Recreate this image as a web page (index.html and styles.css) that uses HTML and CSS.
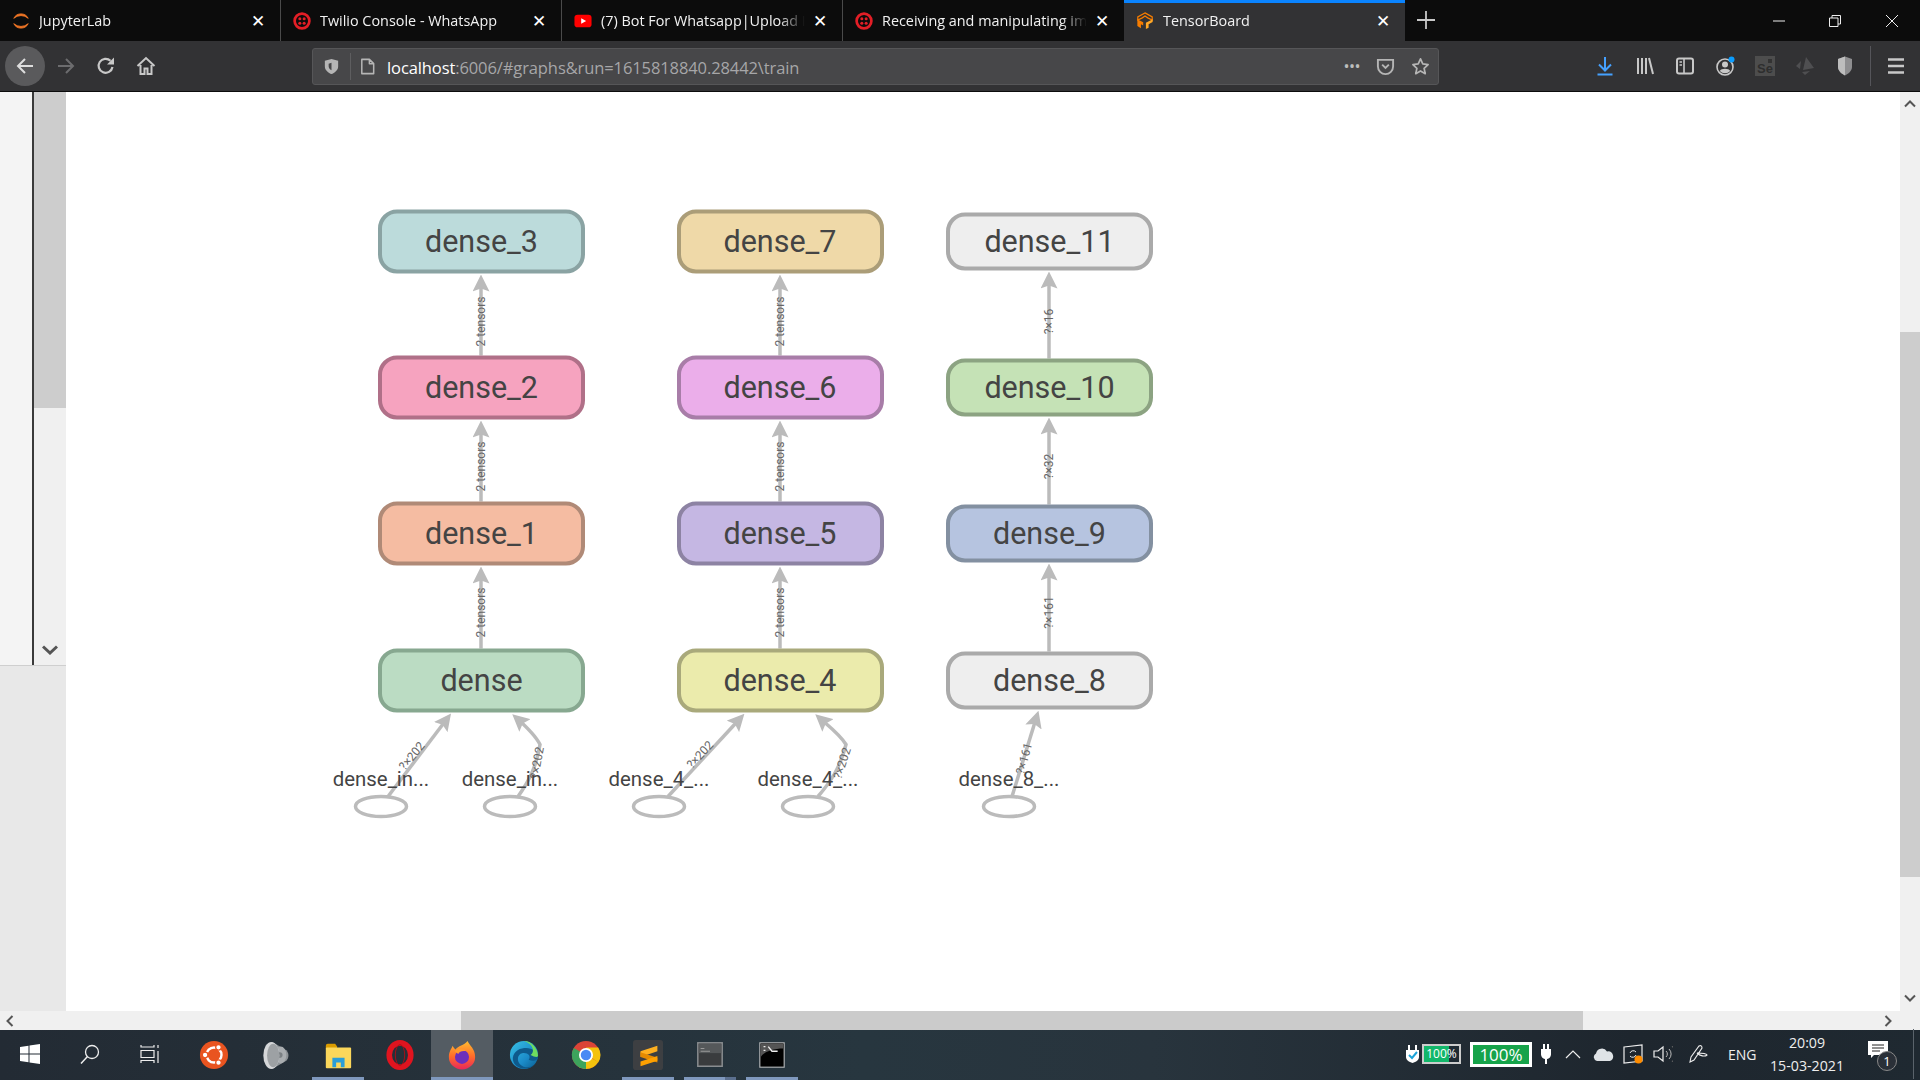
FILE: index.html
```html
<!DOCTYPE html>
<html lang="en">
<head>
    <meta charset="UTF-8">
    <meta name="viewport" content="width=device-width, initial-scale=1.0">
    <title>TensorBoard</title>
    <link rel="stylesheet" href="styles.css">
</head>
<body>
    <!-- browser tabs -->
    <div class="tabbar">
        <div class="tab">
            <svg class="favicon" viewBox="0 0 20 20"><path d="M2 7 A9 9 0 0 1 18 7 A12 12 0 0 0 2 7Z" fill="#f37726" stroke="#f37726"/><path d="M2 13 A9 9 0 0 0 18 13 A12 12 0 0 1 2 13Z" fill="#f37726" stroke="#f37726"/></svg>
            <span class="tab-label">JupyterLab</span>
            <span class="tab-close">✕</span>
        </div>
        <div class="tab">
            <svg class="favicon" viewBox="0 0 20 20"><circle cx="10" cy="10" r="8.2" fill="none" stroke="#e31e26" stroke-width="3"/><g fill="#e31e26"><circle cx="7.6" cy="7.6" r="1.7"/><circle cx="12.4" cy="7.6" r="1.7"/><circle cx="7.6" cy="12.4" r="1.7"/><circle cx="12.4" cy="12.4" r="1.7"/></g></svg>
            <span class="tab-label">Twilio Console - WhatsApp</span>
            <span class="tab-close">✕</span>
        </div>
        <div class="tab">
            <svg class="favicon" viewBox="0 0 20 20"><rect x="0.5" y="3" width="19" height="14" rx="3.5" fill="#f00"/><path d="M8 7 L13.5 10 L8 13Z" fill="#fff"/></svg>
            <span class="tab-label">(7) Bot For Whatsapp|Upload I</span>
            <span class="tab-close">✕</span>
        </div>
        <div class="tab">
            <svg class="favicon" viewBox="0 0 20 20"><circle cx="10" cy="10" r="8.2" fill="none" stroke="#e31e26" stroke-width="3"/><g fill="#e31e26"><circle cx="7.6" cy="7.6" r="1.7"/><circle cx="12.4" cy="7.6" r="1.7"/><circle cx="7.6" cy="12.4" r="1.7"/><circle cx="12.4" cy="12.4" r="1.7"/></g></svg>
            <span class="tab-label">Receiving and manipulating im</span>
            <span class="tab-close">✕</span>
        </div>
        <div class="tab tab-active">
            <svg class="favicon" viewBox="0 0 20 20"><path d="M10 1 L18 5.5 V9 L13 6.5 L10 4.5 L7 6.5 L2 9 V5.5Z" fill="none" stroke="#f57c00" stroke-width="1.4"/><path d="M1.5 8 L8 11.5 V15 L5.5 13.5 V18 L1.5 15.5Z" fill="#f57c00"/><path d="M18.5 8 L11 12 V19 L14 17.5 V13.5 L18.5 11Z" fill="#ffa726"/></svg>
            <span class="tab-label">TensorBoard</span>
            <span class="tab-close">✕</span>
        </div>
        <svg class="newtab" viewBox="0 0 18 18"><path d="M9 0 V18 M0 9 H18" stroke="#c8c8c8" stroke-width="1.8"/></svg>
        <div class="winctl">
            <svg class="winbtn" viewBox="0 0 12 12"><path d="M0 6 H12" stroke="#eee"/></svg>
            <svg class="winbtn" viewBox="0 0 12 12"><path d="M3 3 V0.5 H11.5 V9 H9 M0.5 3 H9 V11.5 H0.5Z" fill="none" stroke="#eee"/></svg>
            <svg class="winbtn" viewBox="0 0 12 12"><path d="M0 0 L12 12 M12 0 L0 12" stroke="#eee"/></svg>
        </div>
    </div>

    <!-- toolbar -->
    <div class="toolbar">
        <div class="tool tool-back"><svg class="ticon" viewBox="0 0 20 20"><path d="M18 10 H3 M10 3 L3 10 L10 17" fill="none" stroke="#ddd" stroke-width="2"/></svg></div>
        <div class="tool"><svg class="ticon" viewBox="0 0 20 20"><path d="M2 10 H17 M10 3 L17 10 L10 17" fill="none" stroke="#6c6c6e" stroke-width="2"/></svg></div>
        <div class="tool"><svg class="ticon" viewBox="0 0 20 20"><path d="M16.5 11 A7 7 0 1 1 14.5 4.8" fill="none" stroke="#c8c8c8" stroke-width="2.2"/><path d="M18 1.5 V8.5 H11Z" fill="#c8c8c8"/></svg></div>
        <div class="tool"><svg class="ticon" viewBox="0 0 20 20"><path d="M1.5 10 L10 2 L18.5 10 M4.5 9 V18 H8.5 V12.5 H11.5 V18 H15.5 V9" fill="none" stroke="#c8c8c8" stroke-width="2"/></svg></div>

        <div class="urlbar">
            <svg class="uicon" viewBox="0 0 20 20"><path d="M10 2 L17 4 V10 C17 14 13 17 10 18 C7 17 3 14 3 10 V4Z M10 6 L7 7 V10 C7 12 9 13.5 10 14Z" fill="#b5b5b5" fill-rule="evenodd"/></svg>
            <span class="url-sep"></span>
            <svg class="uicon" viewBox="0 0 20 20"><path d="M4 2.5 H12 L16.5 7 V17.5 H4Z M12 2.5 V7 H16.5" fill="none" stroke="#b5b5b5" stroke-width="1.6" stroke-linejoin="round"/></svg>
            <span class="url"><b class="url-host">localhost</b>:6006/#graphs&amp;run=1615818840.28442\train</span>
            <span class="url-dots">•••</span>
            <svg class="uicon" viewBox="0 0 20 20"><path d="M2 3 H18 V10 A8 8 0 0 1 2 10Z M6.5 8 L10 11.5 L13.5 8" fill="none" stroke="#b5b5b5" stroke-width="2"/></svg>
            <svg class="uicon uicon-star" viewBox="0 0 20 20"><path d="M10 2 L12.4 7.3 L18 8 L13.8 11.9 L15 17.6 L10 14.7 L5 17.6 L6.2 11.9 L2 8 L7.6 7.3Z" fill="none" stroke="#b5b5b5" stroke-width="1.8" stroke-linejoin="round"/></svg>
        </div>

        <div class="tools-right">
            <div class="tool"><svg class="ticon" viewBox="0 0 20 20"><path d="M10 1 V14 M4 8.5 L10 14.5 L16 8.5 M2.5 18.5 H17.5" fill="none" stroke="#45a1ff" stroke-width="2"/></svg></div>
            <div class="tool"><svg class="ticon" viewBox="0 0 20 20"><path d="M3 2 V18 M7 2 V18 M11 2 V18 M14 2 L18 18" fill="none" stroke="#c8c8c8" stroke-width="2"/></svg></div>
            <div class="tool"><svg class="ticon" viewBox="0 0 20 20"><rect x="2" y="2.5" width="16" height="15" rx="2" fill="none" stroke="#c8c8c8" stroke-width="2"/><path d="M9 2.5 V17.5 M4.5 6 H7 M4.5 9 H7" stroke="#c8c8c8" stroke-width="1.6"/></svg></div>
            <div class="tool"><svg class="ticon" viewBox="0 0 20 20"><circle cx="10" cy="11" r="8" fill="none" stroke="#c8c8c8" stroke-width="1.6"/><circle cx="10" cy="8.5" r="3" fill="#c8c8c8"/><path d="M4.8 15 C6 12 14 12 15.2 15 A7 7 0 0 1 4.8 15Z" fill="#c8c8c8"/><circle cx="16.5" cy="3.5" r="3" fill="#0a9dff"/></svg></div>
            <div class="tool"><svg class="ticon" viewBox="0 0 20 20"><rect width="20" height="20" y="0" fill="#4d4d4d"/><path d="M13 3 H17 V7 H13Z" fill="#333"/><text class="se-text" x="2" y="17">Se</text></svg></div>
            <div class="tool"><svg class="ticon" viewBox="0 0 20 20"><path d="M11 1 L19 12 L8 14Z M6 5 L1 10 L5 13Z M7 16 L15 15 L10 19Z" fill="#4f4f51"/></svg></div>
            <div class="tool"><svg class="ticon" viewBox="0 0 20 20"><path d="M10 0.5 L17 3 V11 C17 15 13 18 10 19.5 C7 18 3 15 3 11 V3Z" fill="#8e8e90"/><path d="M10 0.5 L3 3 V11 C3 15 7 18 10 19.5Z" fill="#bdbdbd"/></svg></div>
            <span class="tool-sep"></span>
            <div class="tool tool-menu"><svg class="ticon" viewBox="0 0 20 20"><path d="M2 3.5 H18 M2 10 H18 M2 16.5 H18" stroke="#c8c8c8" stroke-width="2.4"/></svg></div>
        </div>
    </div>

    <!-- page -->
    <div class="page">
        <div class="page-top">
            <aside class="sidebar">
                <div class="side-upper">
                    <div class="side-pane"></div>
                    <div class="side-scroll">
                        <div class="side-thumb"></div>
                        <svg class="side-arrow" viewBox="0 0 16 10"><path d="M1 1.5 L8 8 L15 1.5" fill="none" stroke="#555" stroke-width="3"/></svg>
                    </div>
                </div>
                <div class="side-lower"></div>
            </aside>

            <main class="graph-wrap">
                <svg class="graph" viewBox="66 92 1834 918">
                    <defs>
                        <marker id="head" viewBox="0 0 17 17" markerWidth="17" markerHeight="17" refX="12" refY="8.5" orient="auto" markerUnits="userSpaceOnUse">
                            <path class="head" d="M17 8.5 L0 0 L3 8.5 L0 17Z"/>
                        </marker>
                    </defs>

                    <!-- edges -->
                    <g class="edges">
                        <path d="M481 355 V279"/>
                        <path d="M481 501 V425"/>
                        <path d="M481 648 V571"/>
                        <path d="M780 355 V279"/>
                        <path d="M780 501 V425"/>
                        <path d="M780 648 V571"/>
                        <path d="M1049 358 V276"/>
                        <path d="M1049 504 V422"/>
                        <path d="M1049 651 V568"/>
                        <path d="M388 796 L448 717"/>
                        <path d="M518 796 C528 782 536 768 540 744 C535 734 525 725 516 717"/>
                        <path d="M668 796 L741 717"/>
                        <path d="M818 796 C830 782 840 768 846 744 C840 734 828 725 819 717"/>
                        <path d="M1012 796 L1037 715"/>
                    </g>

                    <!-- nodes -->
                    <rect class="node teal" x="380" y="211" width="203" height="60" rx="17"/>
                    <rect class="node pink" x="380" y="357" width="203" height="60" rx="17"/>
                    <rect class="node salmon" x="380" y="503" width="203" height="60" rx="17"/>
                    <rect class="node green" x="380" y="650" width="203" height="60" rx="17"/>
                    <rect class="node sand" x="679" y="211" width="203" height="60" rx="17"/>
                    <rect class="node orchid" x="679" y="357" width="203" height="60" rx="17"/>
                    <rect class="node purple" x="679" y="503" width="203" height="60" rx="17"/>
                    <rect class="node lemon" x="679" y="650" width="203" height="60" rx="17"/>
                    <rect class="node grey" x="948" y="214" width="203" height="54" rx="17"/>
                    <rect class="node lime" x="948" y="360" width="203" height="54" rx="17"/>
                    <rect class="node slate" x="948" y="506" width="203" height="54" rx="17"/>
                    <rect class="node grey" x="948" y="653" width="203" height="54" rx="17"/>

                    <g class="node-text">
                        <text x="481.5" y="251">dense_3</text>
                        <text x="481.5" y="397">dense_2</text>
                        <text x="481.5" y="543">dense_1</text>
                        <text x="481.5" y="690">dense</text>
                        <text x="780" y="251">dense_7</text>
                        <text x="780" y="397">dense_6</text>
                        <text x="780" y="543">dense_5</text>
                        <text x="780" y="690">dense_4</text>
                        <text x="1049.5" y="251">dense_11</text>
                        <text x="1049.5" y="397">dense_10</text>
                        <text x="1049.5" y="543">dense_9</text>
                        <text x="1049.5" y="690">dense_8</text>
                    </g>

                    <!-- edge labels -->
                    <g class="edge-text">
                        <text transform="translate(485 321) rotate(-90)">2 tensors</text>
                        <text transform="translate(485 466) rotate(-90)">2 tensors</text>
                        <text transform="translate(485 612) rotate(-90)">2 tensors</text>
                        <text transform="translate(784 321) rotate(-90)">2 tensors</text>
                        <text transform="translate(784 466) rotate(-90)">2 tensors</text>
                        <text transform="translate(784 612) rotate(-90)">2 tensors</text>
                        <text transform="translate(1053 321) rotate(-90)">?×16</text>
                        <text transform="translate(1053 466) rotate(-90)">?×32</text>
                        <text transform="translate(1053 612) rotate(-90)">?×161</text>
                        <text transform="translate(415 758) rotate(-50)">?×202</text>
                        <text transform="translate(541 763) rotate(-80)">?×202</text>
                        <text transform="translate(703 757) rotate(-47)">?×202</text>
                        <text transform="translate(846 764) rotate(-72)">?×202</text>
                        <text transform="translate(1028 759) rotate(-75)">?×161</text>
                    </g>

                    <!-- inputs -->
                    <g class="input-node">
                        <ellipse cx="381" cy="806" rx="25.5" ry="10"/>
                        <ellipse cx="510" cy="806" rx="25.5" ry="10"/>
                        <ellipse cx="659" cy="806" rx="25.5" ry="10"/>
                        <ellipse cx="808" cy="806" rx="25.5" ry="10"/>
                        <ellipse cx="1009" cy="806" rx="25.5" ry="10"/>
                    </g>
                    <g class="input-text">
                        <text x="381" y="785">dense_in...</text>
                        <text x="510" y="785">dense_in...</text>
                        <text x="659" y="785">dense_4_...</text>
                        <text x="808" y="785">dense_4_...</text>
                        <text x="1009" y="785">dense_8_...</text>
                    </g>
                </svg>
            </main>

            <div class="vscroll">
                <svg class="vs-arrow" viewBox="0 0 12 8"><path d="M1 6.5 L6 1.5 L11 6.5" fill="none" stroke="#555" stroke-width="2"/></svg>
                <div class="vs-thumb"></div>
                <svg class="vs-arrow" viewBox="0 0 12 8"><path d="M1 1.5 L6 6.5 L11 1.5" fill="none" stroke="#555" stroke-width="2"/></svg>
            </div>
        </div>

        <div class="hscroll">
            <svg class="hs-arrow" viewBox="0 0 8 12"><path d="M6.5 1 L1.5 6 L6.5 11" fill="none" stroke="#555" stroke-width="2"/></svg>
            <div class="hs-thumb"></div>
            <svg class="hs-arrow" viewBox="0 0 8 12"><path d="M1.5 1 L6.5 6 L1.5 11" fill="none" stroke="#555" stroke-width="2"/></svg>
        </div>
    </div>

    <!-- windows taskbar -->
    <footer class="taskbar">
        <div class="sys-btn"><svg class="task-icon" viewBox="0 0 20 20"><path d="M0 3 L8.5 1.8 V9.5 H0Z M9.5 1.6 L20 0 V9.5 H9.5Z M0 10.5 H8.5 V18.2 L0 17Z M9.5 10.5 H20 V20 L9.5 18.4Z" fill="#fff"/></svg></div>
        <div class="sys-btn"><svg class="task-icon" viewBox="0 0 20 20"><circle cx="12" cy="8" r="6.5" fill="none" stroke="#eee" stroke-width="1.3"/><path d="M7.5 12.5 L1 19.5" stroke="#eee" stroke-width="1.5"/></svg></div>
        <div class="sys-btn"><svg class="task-icon" viewBox="0 0 20 20"><path d="M1 1 V3 H14 V1 M1 6.5 H14 V13.5 H1Z M1 19 V16.5 H14 V19 M18 1 V4 M18 7 V19" fill="none" stroke="#eee" stroke-width="1.2"/></svg></div>

        <div class="app">
            <svg class="app-icon" viewBox="0 0 32 32"><circle cx="16" cy="16" r="15" fill="#e95420"/><circle cx="16" cy="16" r="8" fill="none" stroke="#fff" stroke-width="2.6"/><g fill="#fff" stroke="#e95420" stroke-width="1.4"><circle cx="6.5" cy="16" r="3"/><circle cx="20.8" cy="7.8" r="3"/><circle cx="20.8" cy="24.2" r="3"/></g></svg>
        </div>
        <div class="app">
            <svg class="app-icon" viewBox="0 0 32 32"><path d="M12 2 L27 11 C30 14 30 19 27 22 L12 31Z" fill="#8e9397"/><ellipse cx="21" cy="16" rx="6" ry="9" fill="#a9adb0"/><circle cx="20" cy="16" r="3" fill="#7b8084"/><ellipse cx="11" cy="16.5" rx="8.5" ry="14.5" fill="#d5d7d9"/><ellipse cx="13" cy="16.5" rx="6.5" ry="12.5" fill="#9da1a4"/></svg>
        </div>
        <div class="app app-running">
            <svg class="app-icon" viewBox="0 0 32 32"><path d="M3 6 Q3 4 5 4 H13 L15 7 V9 H3Z" fill="#d99b00"/><rect x="3" y="8" width="27" height="22" rx="1" fill="#fbd75b"/><path d="M10 29 V19 H23 V29 H19 V24 H14 V29Z" fill="#2b9ed8"/></svg>
        </div>
        <div class="app">
            <svg class="app-icon" viewBox="0 0 32 32"><ellipse cx="16" cy="16" rx="11.5" ry="13" fill="none" stroke="#e0141f" stroke-width="6"/><ellipse cx="16" cy="16" rx="5" ry="11" fill="none" stroke="#a80f18" stroke-width="1"/></svg>
        </div>
        <div class="app app-running app-active">
            <svg class="app-icon" viewBox="0 0 32 32"><defs><linearGradient id="fx" x1="0" y1="0" x2="0" y2="1"><stop offset="0" stop-color="#ffbd30"/><stop offset="0.55" stop-color="#ff6a2a"/><stop offset="1" stop-color="#e8265c"/></linearGradient></defs><path d="M22 1 C24 6 30 9 30 18 A14 13.5 0 1 1 2 18 C2 12 5 9 6 6 C7 8 8 9 9 10 C12 6 18 6 22 1Z" fill="url(#fx)"/><circle cx="16" cy="18" r="7.5" fill="#6b2fbb"/><path d="M8 12 C12 8 18 9 21 12 C17 11 13 12 12 15Z" fill="#ff9a2e"/></svg>
        </div>
        <div class="app">
            <svg class="app-icon" viewBox="0 0 32 32"><defs><linearGradient id="eg" x1="0" y1="0" x2="1" y2="1"><stop offset="0" stop-color="#39c1e6"/><stop offset="0.6" stop-color="#1b8cc9"/><stop offset="1" stop-color="#0b5c8f"/></linearGradient></defs><circle cx="16" cy="16" r="15" fill="url(#eg)"/><path d="M14 9 C22 7 31 11 31 18 C31 22 25 23 21 21 C24 17 20 13 14 14 C9 15 8 22 12 26 C16 30 22 30 26 27 C22 32 9 32 5 24 C2 17 7 10 14 9Z" fill="#0e5a8c"/><path d="M31 17 C31 9 24 1 16 1 C24 3 29 12 23 16 C27 18 30 19 31 17Z" fill="#6fdc5f"/></svg>
        </div>
        <div class="app">
            <svg class="app-icon" viewBox="0 0 32 32"><circle cx="16" cy="16" r="15" fill="#db4437"/><path d="M16 16 L29 23.5 A15 15 0 0 1 16 31 L8.5 29 Z" fill="#f4c20d"/><path d="M16 16 L16 31 A15 15 0 0 1 3 8.5Z" fill="#3da45c"/><path d="M16 8 H29 A15 15 0 0 1 29 24 L21 18Z" fill="#f4c20d"/><circle cx="16" cy="16" r="7.5" fill="#fff"/><circle cx="16" cy="16" r="5.6" fill="#4a8af4"/></svg>
        </div>
        <div class="app app-running">
            <svg class="app-icon" viewBox="0 0 32 32"><rect width="32" height="32" rx="3" fill="#3d3f42"/><path d="M26 6 L8 12 V18 L26 12Z" fill="#ffb020"/><path d="M8 13 L26 19 V24 L8 18Z" fill="#e58a00"/><path d="M26 17 L8 23 V28 L26 22Z" fill="#ffa000"/></svg>
        </div>
        <div class="app app-split">
            <svg class="app-icon" viewBox="0 0 32 32"><rect x="3" y="3" width="26" height="25" fill="#3a3c3e" stroke="#8a8d90" stroke-width="1.6"/><rect x="4" y="4" width="24" height="10" fill="#55585a"/><path d="M6 9 H10 M6 12 H16" stroke="#999" stroke-width="1.2"/></svg>
        </div>
        <div class="app app-running">
            <svg class="app-icon" viewBox="0 0 32 32"><rect x="3" y="3" width="26" height="26" fill="#000" stroke="#b5b8ba" stroke-width="1.2"/><path d="M4 4 H28 V9 C18 9 8 12 4 18Z" fill="#555"/><path d="M7 7 H9 M7 11 H9 M12 7 L16 12 H22" stroke="#eee" stroke-width="1.4" fill="none"/></svg>
        </div>

        <div class="tray">
            <svg class="tray-plug" viewBox="0 0 15 20"><path d="M4 1 V6 M11 1 V6" stroke="#fff" stroke-width="2"/><path d="M1 6 H14 V13 C14 16 11 18 7.5 19 C4 18 1 16 1 13Z" fill="#fff"/><path d="M4 11 L7 14 L12 8" fill="none" stroke="#1ca3d8" stroke-width="2"/></svg>
            <span class="batt-small">100%</span>
            <span class="batt-big">100%</span>
            <svg class="tray-power" viewBox="0 0 10 22"><path d="M3 1 V6 M7 1 V6 M5 15 V21" stroke="#fff" stroke-width="2"/><path d="M0 6 H10 V11 C10 14 8 16 5 16 C2 16 0 14 0 11Z" fill="#fff"/></svg>
            <svg class="tray-caret" viewBox="0 0 16 9"><path d="M1 8 L8 1 L15 8" fill="none" stroke="#eee" stroke-width="1.2"/></svg>
            <svg class="tray-cloud" viewBox="0 0 22 14"><path d="M5 14 A4 4 0 0 1 4 6.5 A6 6 0 0 1 15 4.5 A5 5 0 0 1 18 14Z" fill="#dfe3e6"/></svg>
            <svg class="tray-box" viewBox="0 0 20 20"><path d="M1 3 L19 1 V17 L1 19Z" fill="none" stroke="#eee" stroke-width="1.2"/><path d="M7 9 A3.5 3.5 0 0 1 13 8 M13 11 A3.5 3.5 0 0 1 7 12" fill="none" stroke="#eee"/><circle cx="15.5" cy="15.5" r="4" fill="#ff8c00"/></svg>
            <svg class="tray-speaker" viewBox="0 0 20 20"><path d="M1 7 H5 L10 3 V17 L5 13 H1Z" fill="none" stroke="#eee" stroke-width="1.2"/><path d="M13 7 A4 4 0 0 1 13 13 M16 5 A7 7 0 0 1 16 15" fill="none" stroke="#bbb"/><path d="M19 2 A11 11 0 0 1 19 18" fill="none" stroke="#666"/></svg>
            <svg class="tray-pen" viewBox="0 0 20 20"><path d="M2 18 L3 13 L11 2 C13 1 14 2 14 4 L6 16Z M9 9 C12 9 18 9 19 11 C17 13 12 12 9 9" fill="none" stroke="#eee" stroke-width="1.1"/></svg>
            <span class="lang">ENG</span>
            <div class="clock"><span>20:09</span><span>15-03-2021</span></div>
            <div class="notify">
                <svg class="notify-icon" viewBox="0 0 20 18"><path d="M0 0 H20 V14 H6 L3 17 V14 H0Z" fill="#fff"/><path d="M4 4 H16 M4 7 H16 M4 10 H12" stroke="#222" stroke-width="1"/></svg>
                <span class="notify-count">1</span>
            </div>
            <span class="show-desktop"></span>
        </div>
    </footer>
</body>
</html>
```

FILE: styles.css
```css
* {
    box-sizing: border-box;
}
html, body {
    margin: 0;
    padding: 0;
    width: 1920px;
    height: 1080px;
    overflow: hidden;
}
body {
    font-family: 'Open Sans', sans-serif;
    background: #fff;
    display: flex;
    flex-direction: column;
}

/* tabs */
.tabbar {
    height: 41px;
    background: #0c0c0c;
    display: flex;
    align-items: stretch;
}
.tab {
    width: 281px;
    display: flex;
    align-items: center;
    padding: 0 14px 0 12px;
    border-right: 1px solid #4a4a4a;
    color: #f2f2f2;
    font-size: 14.4px;
}
.tab:nth-child(4) {
    border-right: none;
}
.tab-active {
    background: #323234;
    border-top: 3px solid #0a84ff;
    border-right: none;
    padding-bottom: 3px;
}
.favicon {
    width: 18px;
    height: 18px;
    flex: none;
}
.tab-label {
    flex: 1;
    margin-left: 9px;
    white-space: nowrap;
    overflow: hidden;
    -webkit-mask-image: linear-gradient(to left, transparent 0, #000 26px);
    mask-image: linear-gradient(to left, transparent 0, #000 26px);
}
.tab-close {
    width: 16px;
    margin-left: 7px;
    color: #fff;
    font-family: 'DejaVu Sans', sans-serif;
    font-size: 17px;
    text-align: center;
}
.newtab {
    width: 18px;
    height: 18px;
    margin: 11px 0 0 12px;
}
.winctl {
    margin-left: auto;
    display: flex;
    align-items: center;
}
.winbtn {
    width: 12px;
    height: 12px;
    margin-right: 44px;
}
.winbtn:nth-child(2) {
    margin-right: 45px;
}
.winbtn:last-child {
    margin-right: 22px;
}

/* toolbar */
.toolbar {
    height: 51px;
    background: #323234;
    border-bottom: 1px solid #0c0c0c;
    display: flex;
    align-items: center;
    padding-left: 5px;
}
.tool {
    width: 40px;
    height: 40px;
    display: flex;
    align-items: center;
    justify-content: center;
    flex: none;
}
.tool-back {
    background: #5a5a5c;
    border-radius: 50%;
    margin-right: 1px;
}
.ticon {
    width: 20px;
    height: 20px;
}
.urlbar {
    width: 1127px;
    height: 37px;
    margin-left: 146px;
    background: #474749;
    border: 1px solid #565658;
    border-radius: 3px;
    display: flex;
    align-items: center;
    padding: 0 8px 0 9px;
    flex: none;
}
.uicon {
    width: 19px;
    height: 19px;
    flex: none;
}
.url-sep {
    width: 1px;
    height: 27px;
    background: #5e5e60;
    margin: 0 7px 0 9px;
}
.url {
    margin-left: 10px;
    padding-top: 2px;
    flex: 1;
    color: #a6a6a8;
    font-size: 16.5px;
    letter-spacing: -0.1px;
    white-space: nowrap;
}
.url-host {
    color: #fff;
    font-weight: 400;
}
.url-dots {
    color: #bdbdbd;
    font-size: 16px;
    letter-spacing: -0.5px;
    margin-right: 16px;
}
.uicon-star {
    margin-left: 16px;
}
.tools-right {
    margin-left: 146px;
    display: flex;
    align-items: center;
    flex: none;
}
.tool-sep {
    width: 1px;
    height: 40px;
    background: #55555a;
    margin-left: 5px;
}
.tool-menu {
    width: 38px;
    margin-left: 6px;
}

/* page area */
.page {
    height: 938px;
    display: flex;
    flex-direction: column;
}
.page-top {
    height: 919px;
    display: flex;
}
.sidebar {
    width: 66px;
    flex: none;
    display: flex;
    flex-direction: column;
}
.side-upper {
    height: 574px;
    display: flex;
    border-bottom: 1px solid #cfcfcf;
}
.side-pane {
    width: 34px;
    background: #f4f4f4;
    border-right: 2px solid #3a3a3a;
}
.side-scroll {
    flex: 1;
    background: #f0f0f0;
    display: flex;
    flex-direction: column;
    align-items: center;
}
.side-thumb {
    width: 100%;
    height: 316px;
    background: #cdcdcd;
}
.side-arrow {
    width: 16px;
    height: 10px;
    margin-top: 237px;
}
.side-lower {
    flex: 1;
    background: #e8e8e8;
}
.graph-wrap {
    flex: 1;
    background: #fff;
}
.graph {
    display: block;
    width: 1834px;
    height: 919px;
}
.vscroll {
    width: 20px;
    flex: none;
    background: #f0f0f0;
    display: flex;
    flex-direction: column;
    align-items: center;
    padding-top: 8px;
}
.vs-arrow {
    width: 12px;
    height: 8px;
    flex: none;
}
.vs-thumb {
    width: 100%;
    height: 545px;
    background: #cdcdcd;
    margin: 224px 0 117px;
}
.hscroll {
    height: 19px;
    background: #f0f0f0;
    display: flex;
    align-items: center;
    padding-left: 6px;
    border-right: 20px solid #f0f0f0;
}
.hs-arrow {
    width: 8px;
    height: 12px;
    flex: none;
}
.hs-thumb {
    width: 1122px;
    height: 100%;
    background: #cbcbcb;
    margin: 0 301px 0 447px;
}

/* graph */
.edges path {
    fill: none;
    stroke: #bbb;
    stroke-width: 3.5;
    marker-end: url(#head);
}
.head {
    fill: #bbb;
}
.node {
    stroke-width: 4;
}
.teal { fill: #bcdbdb; stroke: #8aa3a3; }
.pink { fill: #f6a3bf; stroke: #b07088; }
.salmon { fill: #f5bca2; stroke: #b08a77; }
.green { fill: #bbdcc3; stroke: #87a890; }
.sand { fill: #efd9a8; stroke: #ab9d78; }
.orchid { fill: #ebaeea; stroke: #a87da8; }
.purple { fill: #c5b7e3; stroke: #8d83a3; }
.lemon { fill: #ebebac; stroke: #a9a97b; }
.grey { fill: #eeeeee; stroke: #aaaaaa; }
.lime { fill: #c5e2b6; stroke: #8ca382; }
.slate { fill: #b6c4e0; stroke: #8390a1; }
.node-text text {
    font-family: Roboto, sans-serif;
    font-size: 30.5px;
    fill: #444;
    text-anchor: middle;
}
.edge-text text {
    font-family: Roboto, sans-serif;
    font-size: 12px;
    fill: #666;
    text-anchor: middle;
}
.input-node ellipse {
    fill: #fff;
    stroke: #bbb;
    stroke-width: 3.5;
}
.input-text text {
    font-family: Roboto, sans-serif;
    font-size: 20.4px;
    fill: #444;
    text-anchor: middle;
}
.se-text {
    font-family: 'Liberation Sans', sans-serif;
    font-size: 13px;
    font-weight: 700;
    fill: #2e2e2e;
}

/* taskbar */
.taskbar {
    height: 50px;
    background: linear-gradient(to right, #232b34 0, #27363f 45%, #28343d 60%, #1e262e 85%, #1f2931 100%);
    display: flex;
    align-items: center;
    padding-bottom: 2px;
    color: #eee;
}
.sys-btn {
    width: 60px;
    display: flex;
    justify-content: center;
    flex: none;
}
.sys-btn:nth-child(3) {
    margin-right: 3px;
}
.task-icon {
    width: 20px;
    height: 20px;
}
.app {
    width: 62px;
    height: 50px;
    margin-bottom: -2px;
    flex: none;
    display: flex;
    align-items: center;
    justify-content: center;
    position: relative;
}
.app-running::after, .app-split::after {
    content: "";
    position: absolute;
    left: 5px;
    right: 5px;
    bottom: 0;
    height: 3px;
    background: #7f98bd;
}
.app-active {
    background: #545c63;
}
.app-active::after {
    left: 0;
    right: 0;
}
.app-split::after {
    background: linear-gradient(to right, #7f98bd 0, #7f98bd 78%, #5b6f8e 78%);
}
.app-icon {
    width: 30px;
    height: 30px;
}
.tray {
    margin-left: auto;
    display: flex;
    align-items: center;
    flex: none;
    height: 100%;
}
.tray-plug {
    width: 15px;
    height: 20px;
}
.batt-small {
    width: 39px;
    height: 20px;
    margin-left: 2px;
    border: 2px solid #ccc;
    background: linear-gradient(to right, #12b76a 70%, #1e2a33 70%);
    color: #fff;
    font-size: 12px;
    line-height: 16px;
    text-align: center;
}
.batt-big {
    width: 62px;
    height: 25px;
    margin-left: 9px;
    border: 3px solid #fff;
    background: #16a34a;
    color: #fff;
    font-size: 17px;
    line-height: 19px;
    text-align: center;
}
.tray-power {
    width: 10px;
    height: 22px;
    margin-left: 9px;
}
.tray-caret {
    width: 16px;
    height: 9px;
    margin-left: 14px;
}
.tray-cloud {
    width: 22px;
    height: 14px;
    margin-left: 11px;
}
.tray-box {
    width: 20px;
    height: 20px;
    margin-left: 9px;
}
.tray-speaker {
    width: 20px;
    height: 20px;
    margin-left: 10px;
}
.tray-pen {
    width: 20px;
    height: 20px;
    margin-left: 15px;
}
.lang {
    width: 30px;
    margin-left: 20px;
    font-size: 14px;
    white-space: nowrap;
}
.clock {
    width: 76px;
    margin-left: 11px;
    display: flex;
    flex-direction: column;
    align-items: center;
    gap: 5px;
    font-size: 14.2px;
    line-height: 18px;
    white-space: nowrap;
}
.notify {
    width: 29px;
    height: 26px;
    margin-left: 23px;
    position: relative;
}
.notify-icon {
    width: 20px;
    height: 18px;
    display: block;
    margin-top: 0;
}
.notify-count {
    position: absolute;
    right: 0;
    bottom: -4px;
    width: 20px;
    height: 20px;
    border: 1px solid #888;
    border-radius: 50%;
    background: #2a3038;
    color: #fff;
    font-size: 13px;
    line-height: 18px;
    text-align: center;
}
.show-desktop {
    width: 1px;
    height: 50px;
    background: #5a636b;
    margin: 0 6px 0 16px;
}
```
